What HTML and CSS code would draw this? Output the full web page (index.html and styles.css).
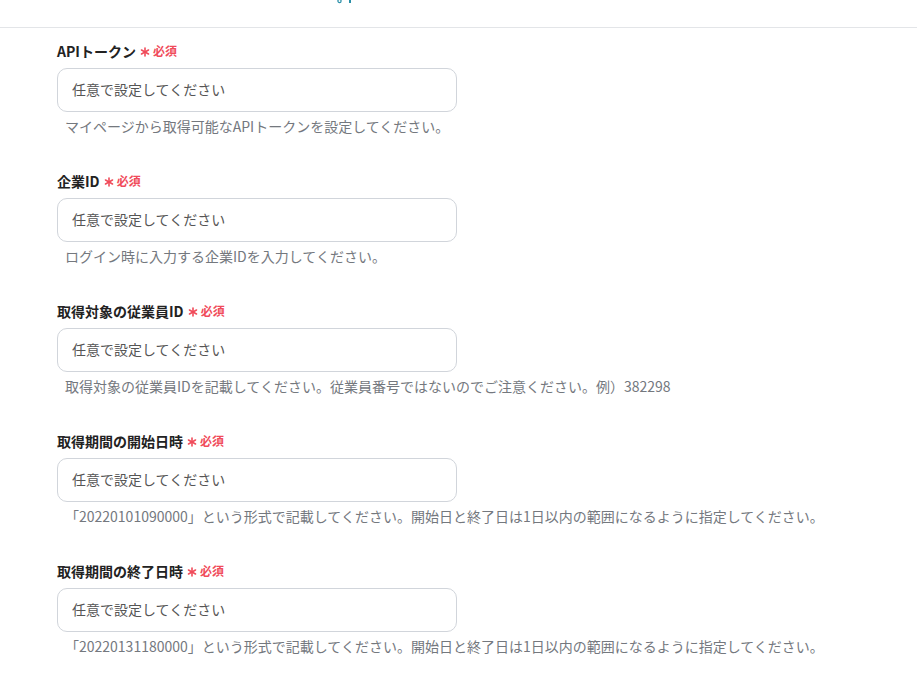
FILE: index.html
```html
<!DOCTYPE html>
<html lang="ja">
<head>
<meta charset="utf-8">
<link rel="stylesheet" href="styles.css">
</head>
<body>
<header class="topbar">
  <svg class="top-mark" width="16" height="5" viewBox="0 0 16 5"><circle cx="2.5" cy="1" r="1.6" fill="none" stroke="#2a8fa8" stroke-width="1.2"/><rect x="12" y="0" width="2" height="3" fill="#2a8fa8"/></svg>
</header>
<main class="form">
  <div class="field">
    <div class="label">APIトークン<span class="req"><svg class="ast" width="10" height="10" viewBox="0 0 10 10"><g stroke="#f04b5a" stroke-width="1.6" stroke-linecap="round"><line x1="5" y1="1" x2="5" y2="9"/><line x1="1.5" y1="3" x2="8.5" y2="7"/><line x1="1.5" y1="7" x2="8.5" y2="3"/></g></svg>必須</span></div>
    <div class="input">任意で設定してください</div>
    <div class="help">マイページから取得可能なAPIトークンを設定してください。</div>
  </div>
  <div class="field">
    <div class="label">企業ID<span class="req"><svg class="ast" width="10" height="10" viewBox="0 0 10 10"><g stroke="#f04b5a" stroke-width="1.6" stroke-linecap="round"><line x1="5" y1="1" x2="5" y2="9"/><line x1="1.5" y1="3" x2="8.5" y2="7"/><line x1="1.5" y1="7" x2="8.5" y2="3"/></g></svg>必須</span></div>
    <div class="input">任意で設定してください</div>
    <div class="help">ログイン時に入力する企業IDを入力してください。</div>
  </div>
  <div class="field">
    <div class="label">取得対象の従業員ID<span class="req"><svg class="ast" width="10" height="10" viewBox="0 0 10 10"><g stroke="#f04b5a" stroke-width="1.6" stroke-linecap="round"><line x1="5" y1="1" x2="5" y2="9"/><line x1="1.5" y1="3" x2="8.5" y2="7"/><line x1="1.5" y1="7" x2="8.5" y2="3"/></g></svg>必須</span></div>
    <div class="input">任意で設定してください</div>
    <div class="help">取得対象の従業員IDを記載してください。従業員番号ではないのでご注意ください。例）382298</div>
  </div>
  <div class="field">
    <div class="label">取得期間の開始日時<span class="req"><svg class="ast" width="10" height="10" viewBox="0 0 10 10"><g stroke="#f04b5a" stroke-width="1.6" stroke-linecap="round"><line x1="5" y1="1" x2="5" y2="9"/><line x1="1.5" y1="3" x2="8.5" y2="7"/><line x1="1.5" y1="7" x2="8.5" y2="3"/></g></svg>必須</span></div>
    <div class="input">任意で設定してください</div>
    <div class="help">「20220101090000」という形式で記載してください。開始日と終了日は1日以内の範囲になるように指定してください。</div>
  </div>
  <div class="field">
    <div class="label">取得期間の終了日時<span class="req"><svg class="ast" width="10" height="10" viewBox="0 0 10 10"><g stroke="#f04b5a" stroke-width="1.6" stroke-linecap="round"><line x1="5" y1="1" x2="5" y2="9"/><line x1="1.5" y1="3" x2="8.5" y2="7"/><line x1="1.5" y1="7" x2="8.5" y2="3"/></g></svg>必須</span></div>
    <div class="input">任意で設定してください</div>
    <div class="help">「20220131180000」という形式で記載してください。開始日と終了日は1日以内の範囲になるように指定してください。</div>
  </div>
</main>
</body>
</html>
```

FILE: styles.css
```css
* { box-sizing: border-box; }
html, body {
  margin: 0;
  background: #fff;
  font-family: "Noto Sans CJK JP", "Noto Sans", sans-serif;
  overflow: hidden;
}
.topbar {
  height: 28px;
  border-bottom: 1px solid #e3e5e8;
  position: relative;
}
.top-mark {
  position: absolute;
  left: 337px;
  top: 0;
}
.form {
  padding: 13px 0 0 57px;
  display: flex;
  flex-direction: column;
  gap: 35px;
}
.field {
  display: flex;
  flex-direction: column;
}
.label {
  font-size: 14px;
  font-weight: 700;
  line-height: 20px;
  color: #222;
  margin-bottom: 7px;
  display: flex;
  align-items: center;
}
.req {
  display: inline-flex;
  align-items: center;
  color: #f04b5a;
  font-size: 12px;
  font-weight: 700;
  margin-left: 4px;
}
.ast { margin-right: 3px; margin-top: 2px; }
.input {
  width: 400px;
  height: 44px;
  border: 1px solid #d1d5db;
  border-radius: 10px;
  padding: 0 0 2px 14px;
  display: flex;
  align-items: center;
  font-size: 14px;
  color: #555;
}
.help {
  margin-top: 4px;
  padding-left: 8px;
  font-size: 14px;
  line-height: 20px;
  color: #74787e;
}
```
